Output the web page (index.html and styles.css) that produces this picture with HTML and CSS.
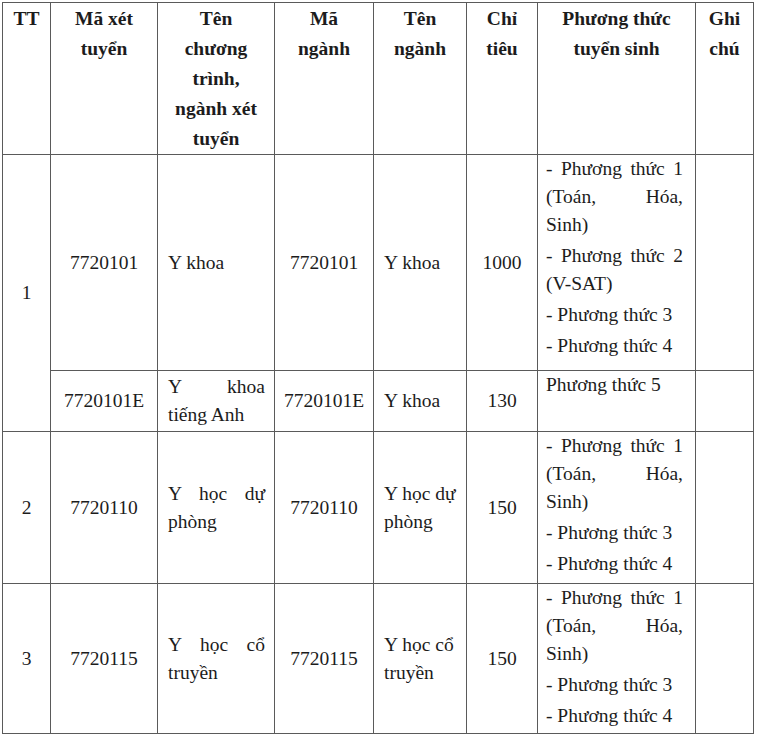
FILE: index.html
```html
<!DOCTYPE html>
<html lang="vi">
<head>
<meta charset="utf-8">
<title>Bảng chỉ tiêu tuyển sinh</title>
<link rel="stylesheet" href="styles.css">
</head>
<body>
<table class="admissions">
  <colgroup>
    <col class="w-tt">
    <col class="w-code">
    <col class="w-prog">
    <col class="w-major-code">
    <col class="w-major">
    <col class="w-quota">
    <col class="w-method">
    <col class="w-note">
  </colgroup>
  <thead>
    <tr class="head">
      <th>TT</th>
      <th>Mã xét<br>tuyển</th>
      <th>Tên<br>chương<br>trình,<br>ngành xét<br>tuyển</th>
      <th>Mã<br>ngành</th>
      <th>Tên<br>ngành</th>
      <th>Chỉ<br>tiêu</th>
      <th>Phương thức<br>tuyển sinh</th>
      <th>Ghi<br>chú</th>
    </tr>
  </thead>
  <tbody>
    <tr class="r1a">
      <td class="c" rowspan="2">1</td>
      <td class="c">7720101</td>
      <td class="prog">Y khoa</td>
      <td class="c">7720101</td>
      <td class="major">Y khoa</td>
      <td class="c">1000</td>
      <td class="method">
        <p>- Phương thức 1 (Toán, Hóa, Sinh)</p>
        <p>- Phương thức 2 (V-SAT)</p>
        <p>- Phương thức 3</p>
        <p>- Phương thức 4</p>
      </td>
      <td></td>
    </tr>
    <tr class="r1b">
      <td class="c">7720101E</td>
      <td class="prog">Y khoa tiếng Anh</td>
      <td class="c">7720101E</td>
      <td class="major">Y khoa</td>
      <td class="c">130</td>
      <td class="method"><p>Phương thức 5</p></td>
      <td></td>
    </tr>
    <tr class="r2">
      <td class="c">2</td>
      <td class="c">7720110</td>
      <td class="prog">Y học dự phòng</td>
      <td class="c">7720110</td>
      <td class="major">Y học dự phòng</td>
      <td class="c">150</td>
      <td class="method">
        <p>- Phương thức 1 (Toán, Hóa, Sinh)</p>
        <p>- Phương thức 3</p>
        <p>- Phương thức 4</p>
      </td>
      <td></td>
    </tr>
    <tr class="r3">
      <td class="c">3</td>
      <td class="c">7720115</td>
      <td class="prog">Y học cổ truyền</td>
      <td class="c">7720115</td>
      <td class="major">Y học cổ truyền</td>
      <td class="c">150</td>
      <td class="method">
        <p>- Phương thức 1 (Toán, Hóa, Sinh)</p>
        <p>- Phương thức 3</p>
        <p>- Phương thức 4</p>
      </td>
      <td></td>
    </tr>
  </tbody>
</table>
</body>
</html>
```
FILE: styles.css
```css
html, body {
  background: #ffffff;
}
body {
  margin: 2px 0 0 2px;
  font-family: "Liberation Serif", "Times New Roman", serif;
  font-size: 19.5px;
  line-height: 28px;
  color: #1c1c1c;
}
.admissions {
  border-collapse: collapse;
  table-layout: fixed;
  width: 751px;
}
.w-tt { width: 48px; }
.w-code { width: 107px; }
.w-prog { width: 117px; }
.w-major-code { width: 99px; }
.w-major { width: 93px; }
.w-quota { width: 71px; }
.w-method { width: 158px; }
.w-note { width: 58px; }

.admissions th,
.admissions td {
  border: 1px solid #5a5a5a;
  padding: 0;
}
.admissions th {
  font-weight: bold;
  text-align: center;
  vertical-align: top;
  line-height: 30px;
  padding-top: 1px;
}
.admissions td {
  vertical-align: middle;
}
.head { height: 151px; }
.r1a { height: 216px; }
.r1b { height: 61px; }
.r2 { height: 152px; }
.r3 { height: 150px; }

.c {
  text-align: center;
}
.prog {
  text-align: justify;
  padding: 0 9px 0 10px !important;
}
.major {
  text-align: left;
  padding: 0 4px 0 10px !important;
}
.method {
  vertical-align: top !important;
  text-align: justify;
  padding: 0 12px 0 8px !important;
}
.method p {
  margin: 0 0 3px;
}
```
